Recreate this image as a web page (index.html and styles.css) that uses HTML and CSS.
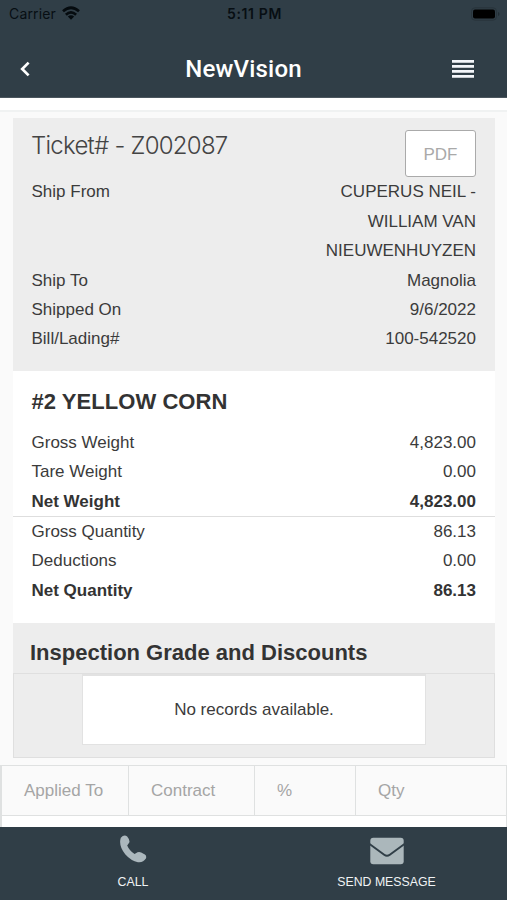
FILE: index.html
```
<!DOCTYPE html>
<html lang="en">
<head>
<meta charset="utf-8">
<title>NewVision</title>
<link rel="stylesheet" href="styles.css">
</head>
<body>
<div class="app">
  <header class="header">
    <div class="status">
      <div class="carrier"><span>Carrier</span>
        <svg width="18" height="14" viewBox="0 0 18 14" fill="none" stroke="#050b0f" stroke-width="2.7"><path d="M1 5.3Q9-1.8 17 5.3"/><path d="M3.9 8.7Q9 4 14.1 8.7"/><path d="M5.8 10.6Q9 8 12.2 10.6L9 13.8Z" fill="#050b0f" stroke="none"/></svg>
      </div>
      <div class="time">5:11 PM</div>
      <svg class="battery" width="29" height="14" viewBox="0 0 29 14"><rect x=".5" y=".8" width="25" height="12.4" rx="3.5" fill="none" stroke="#28343b"/><rect x="2" y="2.5" width="22" height="9" rx="2" fill="#000"/><path d="M27 5v4q1.5-.6 1.5-2T27 5z" fill="#222d34"/></svg>
    </div>
    <nav class="navbar">
      <svg class="back" width="12" height="16" viewBox="0 0 12 16" fill="none" stroke="#fff" stroke-width="2.7"><path d="M9.6 1.6L3.2 8l6.4 6.4"/></svg>
      <h1>NewVision</h1>
      <svg class="menu" width="22" height="18" viewBox="0 0 22 18" fill="#f3f6fa"><path d="M0 0h22v2.8H0zM0 5h22v2.8H0zM0 10h22v2.8H0zM0 15h22v2.8H0z"/></svg>
    </nav>
  </header>
  <main class="content">
    <section class="ticket">
      <div class="ticket-head"><h2>Ticket# - Z002087</h2><button class="pdf">PDF</button></div>
      <div class="row"><span>Ship From</span><span class="value">CUPERUS NEIL - WILLIAM VAN NIEUWENHUYZEN</span></div>
      <div class="row"><span>Ship To</span><span class="value">Magnolia</span></div>
      <div class="row"><span>Shipped On</span><span class="value">9/6/2022</span></div>
      <div class="row"><span>Bill/Lading#</span><span class="value">100-542520</span></div>
    </section>
    <section class="commodity">
      <h3>#2 YELLOW CORN</h3>
      <div class="row"><span>Gross Weight</span><span class="value">4,823.00</span></div>
      <div class="row"><span>Tare Weight</span><span class="value">0.00</span></div>
      <div class="row net"><span>Net Weight</span><span class="value">4,823.00</span></div>
      <div class="quantities">
        <div class="row"><span>Gross Quantity</span><span class="value">86.13</span></div>
        <div class="row"><span>Deductions</span><span class="value">0.00</span></div>
        <div class="row net"><span>Net Quantity</span><span class="value">86.13</span></div>
      </div>
    </section>
    <section class="inspection">
      <h3>Inspection Grade and Discounts</h3>
      <div class="records"><div class="empty">No records available.</div></div>
    </section>
    <div class="applied">
      <div class="columns"><span>Applied To</span><span>Contract</span><span>%</span><span>Qty</span></div>
    </div>
  </main>
  <footer class="tabs">
    <div class="tab call">
      <svg width="28" height="28" viewBox="0 0 28 28" fill="#abb7bd"><path d="M1.8 2.8Q5-.8 8.2 1.5Q11.2 5.2 10.3 7.6L8.2 10.4Q10.4 15.6 15.6 19L18.5 17.3Q20.2 16.5 22.2 17.5L25.9 19.5Q27.9 21 26.9 23.6Q24.2 27.9 18.9 27.2Q12.2 26.1 6.4 19.6Q-.8 10.8 1.8 2.8Z"/></svg>
      <span>CALL</span>
    </div>
    <div class="tab message">
      <svg width="34" height="28" viewBox="0 0 34 28"><rect x=".3" y=".7" width="33.4" height="26.6" rx="3" fill="#abb7bb"/><path d="M-.5 7L14.2 17.7Q17 19.7 19.8 17.7L34.5 7" fill="none" stroke="#303e47" stroke-width="2"/></svg>
      <span>SEND MESSAGE</span>
    </div>
  </footer>
</div>
</body>
</html>
```
FILE: styles.css
```
* { box-sizing: border-box; }
body { margin: 0; font: 17px/29.4px "Liberation Sans", Arial, sans-serif; color: #3b3b3b; }
h1, h2, h3 { margin: 0; }
svg { display: block; }
.app { width: 507px; height: 900px; display: flex; flex-direction: column; overflow: hidden; background: #fafafa; }
.header { height: 98px; flex: none; background: #303e47; border-bottom: 1px solid #4b565e; }
.status { height: 28px; padding: 0 7px 0 9px; display: grid; grid-template-columns: 1fr auto 1fr; align-items: center; font: 14px/28px Inter, sans-serif; color: #070e13; }
.carrier { display: flex; align-items: center; gap: 6px; letter-spacing: .15px; }
.carrier svg { margin-top: -2px; }
.time { font-weight: 600; letter-spacing: .65px; }
.battery { justify-self: end; margin-top: -1px; }
.navbar { height: 69px; padding: 12px 33px 0 19px; display: grid; grid-template-columns: 1fr auto 1fr; align-items: center; }
.navbar h1 { font: 500 24px/32px Roboto, sans-serif; letter-spacing: .2px; color: #fff; margin: 0 9px 0 -9px; padding-left: 6px; transform: translateX(3px); }
.menu { justify-self: end; }
.content { flex: 1; overflow: hidden; border-top: 12px solid #fff; display: flex; flex-direction: column; }
.content::before { content: ""; height: 2px; flex: none; background: #f0f2f2; margin-bottom: 6px; }
.ticket, .commodity, .inspection { margin: 0 12px 0 13px; flex: none; }
.ticket { height: 253px; padding: 12px 19px 0 18.5px; background: #ededed; }
.ticket-head { height: 47.4px; display: flex; justify-content: space-between; }
.ticket-head h2 { font: 300 24px/32px Inter, sans-serif; letter-spacing: -.75px; color: #444; margin-left: -.5px; }
.pdf { width: 71px; height: 47px; border: 1px solid #aaa; border-radius: 3px; background: #fff; color: #a9a9a9; font: 17px/1 "Liberation Sans", Arial, sans-serif; padding: 1px 0 0; }
.row { display: flex; justify-content: space-between; }
.value { text-align: right; max-width: 165px; }
.commodity { height: 252px; padding: 15px 19px 0 18.5px; background: #fff; }
.commodity h3 { font-size: 22px; line-height: 32px; margin-bottom: 9.7px; color: #333; letter-spacing: .05px; }
.net { font-weight: bold; color: #333; }
.quantities { margin: 0 -19px 0 -18.5px; padding: 0 19px 0 18.5px; border-top: 1px solid #dedede; }
.inspection { height: 135px; background: #ededed; }
.inspection h3 { height: 50px; padding: 14px 0 0 17px; font-size: 22px; line-height: 32px; color: #333; }
.records { height: 85px; border: 1px solid #dfdfdf; padding: 0 68px; }
.empty { height: 71px; border: 1px solid #e2e2e2; border-top-width: 2px; background: #fff; text-align: center; line-height: 68px; }
.applied { flex: 1; margin-top: 7px; border: 1px solid #dfe1e1; border-width: 1px 1px 0 2px; background: #fff; }
.columns { height: 50px; display: grid; grid-template-columns: 127px 126px 101px 1fr; background: #fafafa; border-bottom: 1px solid #dfe1e1; color: #a5a5a5; line-height: 50px; }
.columns span { padding-left: 22px; border-right: 1px solid #dfe1e1; }
.columns span:last-child { border: 0; }
.tabs { height: 73px; flex: none; background: #303e47; display: grid; grid-template-columns: 266px 241px; color: #f0f3f5; font-size: 12.3px; line-height: 16px; }
.tab { display: flex; flex-direction: column; align-items: center; padding-top: 8px; }
.tab span { margin-top: 11px; }
.message { padding-top: 10px; }
.message span { margin-top: 9px; }
```
